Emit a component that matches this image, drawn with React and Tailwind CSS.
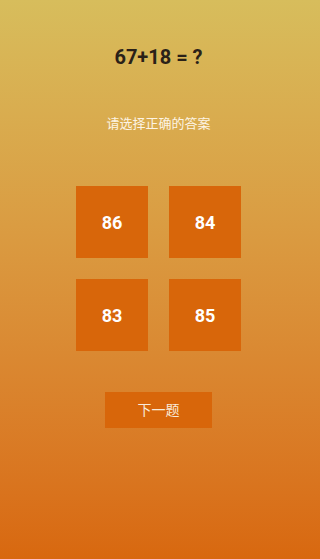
import React from 'react';

const OPTIONS = [86, 84, 83, 85];

export default function App() {
  return (
    <div
      className="flex h-[559px] w-[320px] flex-col items-center bg-gradient-to-b from-[#d7bd5c] to-[#d8680f] pr-[3px]"
      style={{ fontFamily: 'Roboto, "Noto Sans CJK SC", sans-serif' }}
    >
      <h1 className="mt-[44px] text-[20px] font-bold leading-[26px] text-[#2a2118]">67+18 = ?</h1>
      <p className="mt-[44px] text-[13px] leading-[20px] text-[#fdf4e4]">请选择正确的答案</p>
      <div className="mt-[52px] grid grid-cols-2 gap-[21px]">
        {OPTIONS.map(n => (
          <button
            key={n}
            className="flex h-[72px] w-[72px] items-center justify-center bg-[#d8660a] text-[18px] font-bold text-white"
          >
            {n}
          </button>
        ))}
      </div>
      <button className="mt-[41px] h-[36px] w-[107px] bg-[#d8660a] text-[14px] text-[#f8ead8]">下一题</button>
    </div>
  );
}
